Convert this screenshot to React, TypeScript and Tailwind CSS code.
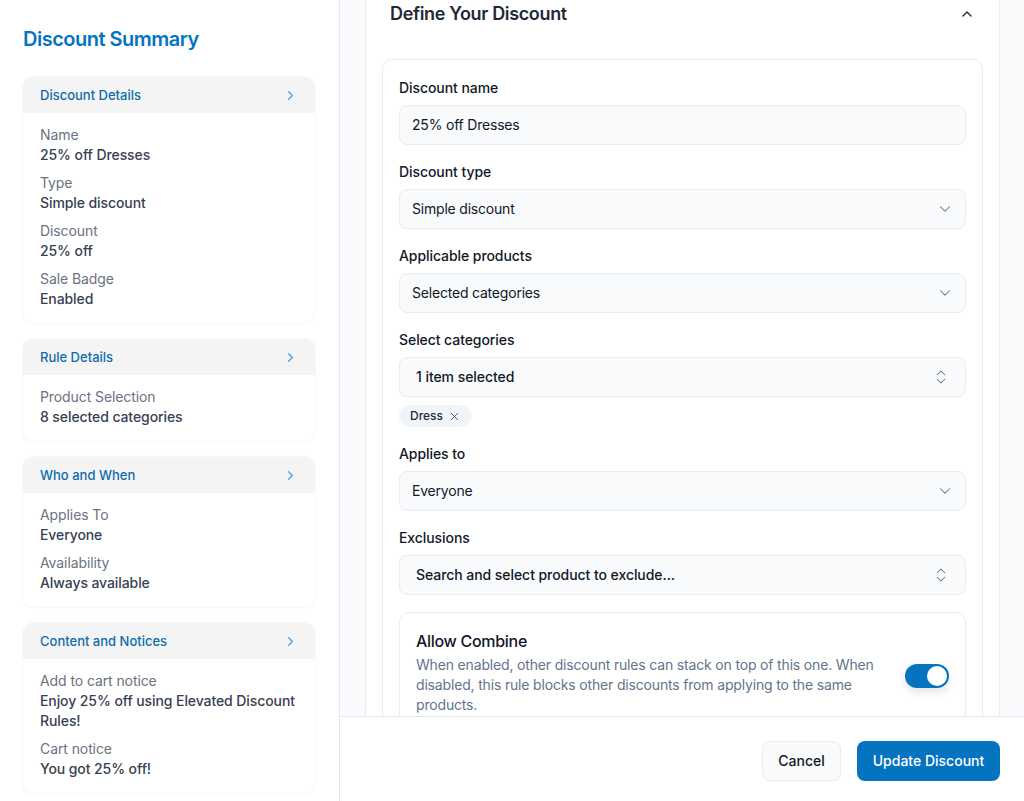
import { ChevronDown, ChevronRight, ChevronUp, ChevronsUpDown, X } from "lucide-react";

const sections = [
	{
		title: "Discount Details",
		rows: [
			["Name", "25% off Dresses"],
			["Type", "Simple discount"],
			["Discount", "25% off"],
			["Sale Badge", "Enabled"],
		],
	},
	{
		title: "Rule Details",
		rows: [["Product Selection", "8 selected categories"]],
	},
	{
		title: "Who and When",
		rows: [
			["Applies To", "Everyone"],
			["Availability", "Always available"],
		],
	},
	{
		title: "Content and Notices",
		rows: [
			["Add to cart notice", "Enjoy 25% off using Elevated Discount Rules!"],
			["Cart notice", "You got 25% off!"],
		],
	},
];

function SummaryCard({ title, rows }: { title: string; rows: string[][] }) {
	return (
		<div className="overflow-hidden rounded-[10px] bg-white shadow-[0_0_2px_rgba(15,23,42,0.1)]">
			<div className="flex h-9 items-center justify-between bg-[#f4f4f5] pl-[17px] pr-[17px] pt-px">
				<span className="text-[13px] font-medium text-[#0f6cab]">{title}</span>
				<ChevronRight className="size-[15px] text-[#4b9fe1]" strokeWidth={2} />
			</div>
			<div className="flex flex-col gap-2 px-[17px] pb-[14px] pt-3 text-sm leading-5 tracking-[-0.09px]">
				{rows.map(([label, value]) => (
					<div key={label}>
						<div className="text-[#6b7280]">{label}</div>
						<div className="font-medium text-[#374151]">{value}</div>
					</div>
				))}
			</div>
		</div>
	);
}

function Field({
	label,
	value,
	icon,
	inset,
}: {
	label: string;
	value: string;
	icon?: "down" | "updown";
	inset?: boolean;
}) {
	return (
		<div>
			<div className="mb-[7px] h-5 text-sm font-medium leading-5 tracking-[-0.07px] text-[#111827]">{label}</div>
			<div
				className={`flex h-10 items-center justify-between rounded-lg border border-[#e8edf4] bg-[#f8fafc] text-sm text-[#111827] ${inset ? "pl-4 pr-[15px] font-medium tracking-[-0.06px]" : "pl-3 pr-[11px] tracking-[-0.2px]"}`}
			>
				<span>{value}</span>
				{icon === "down" && <ChevronDown className="size-[18px] text-[#6b7280]" strokeWidth={1.4} />}
				{icon === "updown" && <ChevronsUpDown className="size-[18px] text-[#6b7280]" strokeWidth={1.4} />}
			</div>
		</div>
	);
}

export default function App() {
	return (
		<div className="flex h-[801px] w-[1024px] overflow-hidden bg-white font-['Inter',sans-serif]">
			<aside className="w-[340px] shrink-0 border-r border-[#e2e8f0] px-[23px] pt-[26px]">
				<h1 className="mb-[25px] h-[26px] text-xl font-semibold leading-[26px] tracking-[-0.5px] text-[#0574c0]">Discount Summary</h1>
				<div className="flex w-[292px] flex-col gap-4">
					{sections.map((s) => (
						<SummaryCard key={s.title} title={s.title} rows={s.rows} />
					))}
				</div>
			</aside>

			<div className="flex min-w-0 flex-1 flex-col">
				<main className="h-[716px] shrink-0 overflow-hidden bg-[#f8fafc] pl-[25px] pr-6">
					<div className="h-full border-x border-[#e8edf4] bg-white px-4">
						<div className="flex h-[26px] items-center justify-between pl-2 pr-2 pt-px">
							<h2 className="text-lg font-semibold tracking-[-0.35px] text-[#1f2937]">Define Your Discount</h2>
							<ChevronUp className="size-4 text-[#1f2937]" strokeWidth={2} />
						</div>
						<div className="mt-[33px] h-[700px] rounded-[10px] border border-[#e8edf4] px-4 pt-[18px]">
							<div className="flex flex-col gap-[17px]">
								<Field label="Discount name" value="25% off Dresses" />
								<Field label="Discount type" value="Simple discount" icon="down" />
								<Field label="Applicable products" value="Selected categories" icon="down" />
								<div>
									<Field label="Select categories" value="1 item selected" icon="updown" inset />
									<div className="mt-2 flex h-[22px] w-fit items-center gap-[5px] rounded-full bg-[#f1f5f9] pl-[11px] pr-[10px] text-xs font-medium text-[#1f2937]">
										Dress
										<X className="size-[13px] text-[#374151]" strokeWidth={1.5} />
									</div>
								</div>
								<Field label="Applies to" value="Everyone" icon="down" />
								<Field label="Exclusions" value="Search and select product to exclude..." icon="updown" inset />
								<div className="h-[200px] rounded-[10px] border border-[#e8edf4] px-4 pt-[17px]">
									<div className="flex items-center justify-between">
										<div className="w-[470px]">
											<div className="text-base font-medium leading-[22px] tracking-[-0.3px] text-[#111827]">Allow Combine</div>
											<p className="mt-[3px] text-sm leading-5 tracking-[-0.17px] text-[#64748b]">
												When enabled, other discount rules can stack on top of this one. When disabled, this rule blocks other discounts from applying to the same products.
											</p>
										</div>
										<div className="mt-[6px] flex h-6 w-11 items-center justify-end rounded-full bg-[#0574c0] pr-0.5 shadow-[0_4px_8px_rgba(15,23,42,0.12)]">
											<div className="size-5 rounded-full bg-white" />
										</div>
									</div>
								</div>
							</div>
						</div>
					</div>
				</main>
				<footer className="flex flex-1 items-start justify-end gap-4 border-t border-[#e2e8f0] bg-white pr-6 pt-6">
					<button className="h-10 w-[79px] rounded-lg border border-[#e8edf4] bg-[#f8fafc] text-sm font-medium text-[#111827]">
						Cancel
					</button>
					<button className="h-10 w-[143px] rounded-lg bg-[#0574c0] text-sm font-medium text-white">
						Update Discount
					</button>
				</footer>
			</div>
		</div>
	);
}
